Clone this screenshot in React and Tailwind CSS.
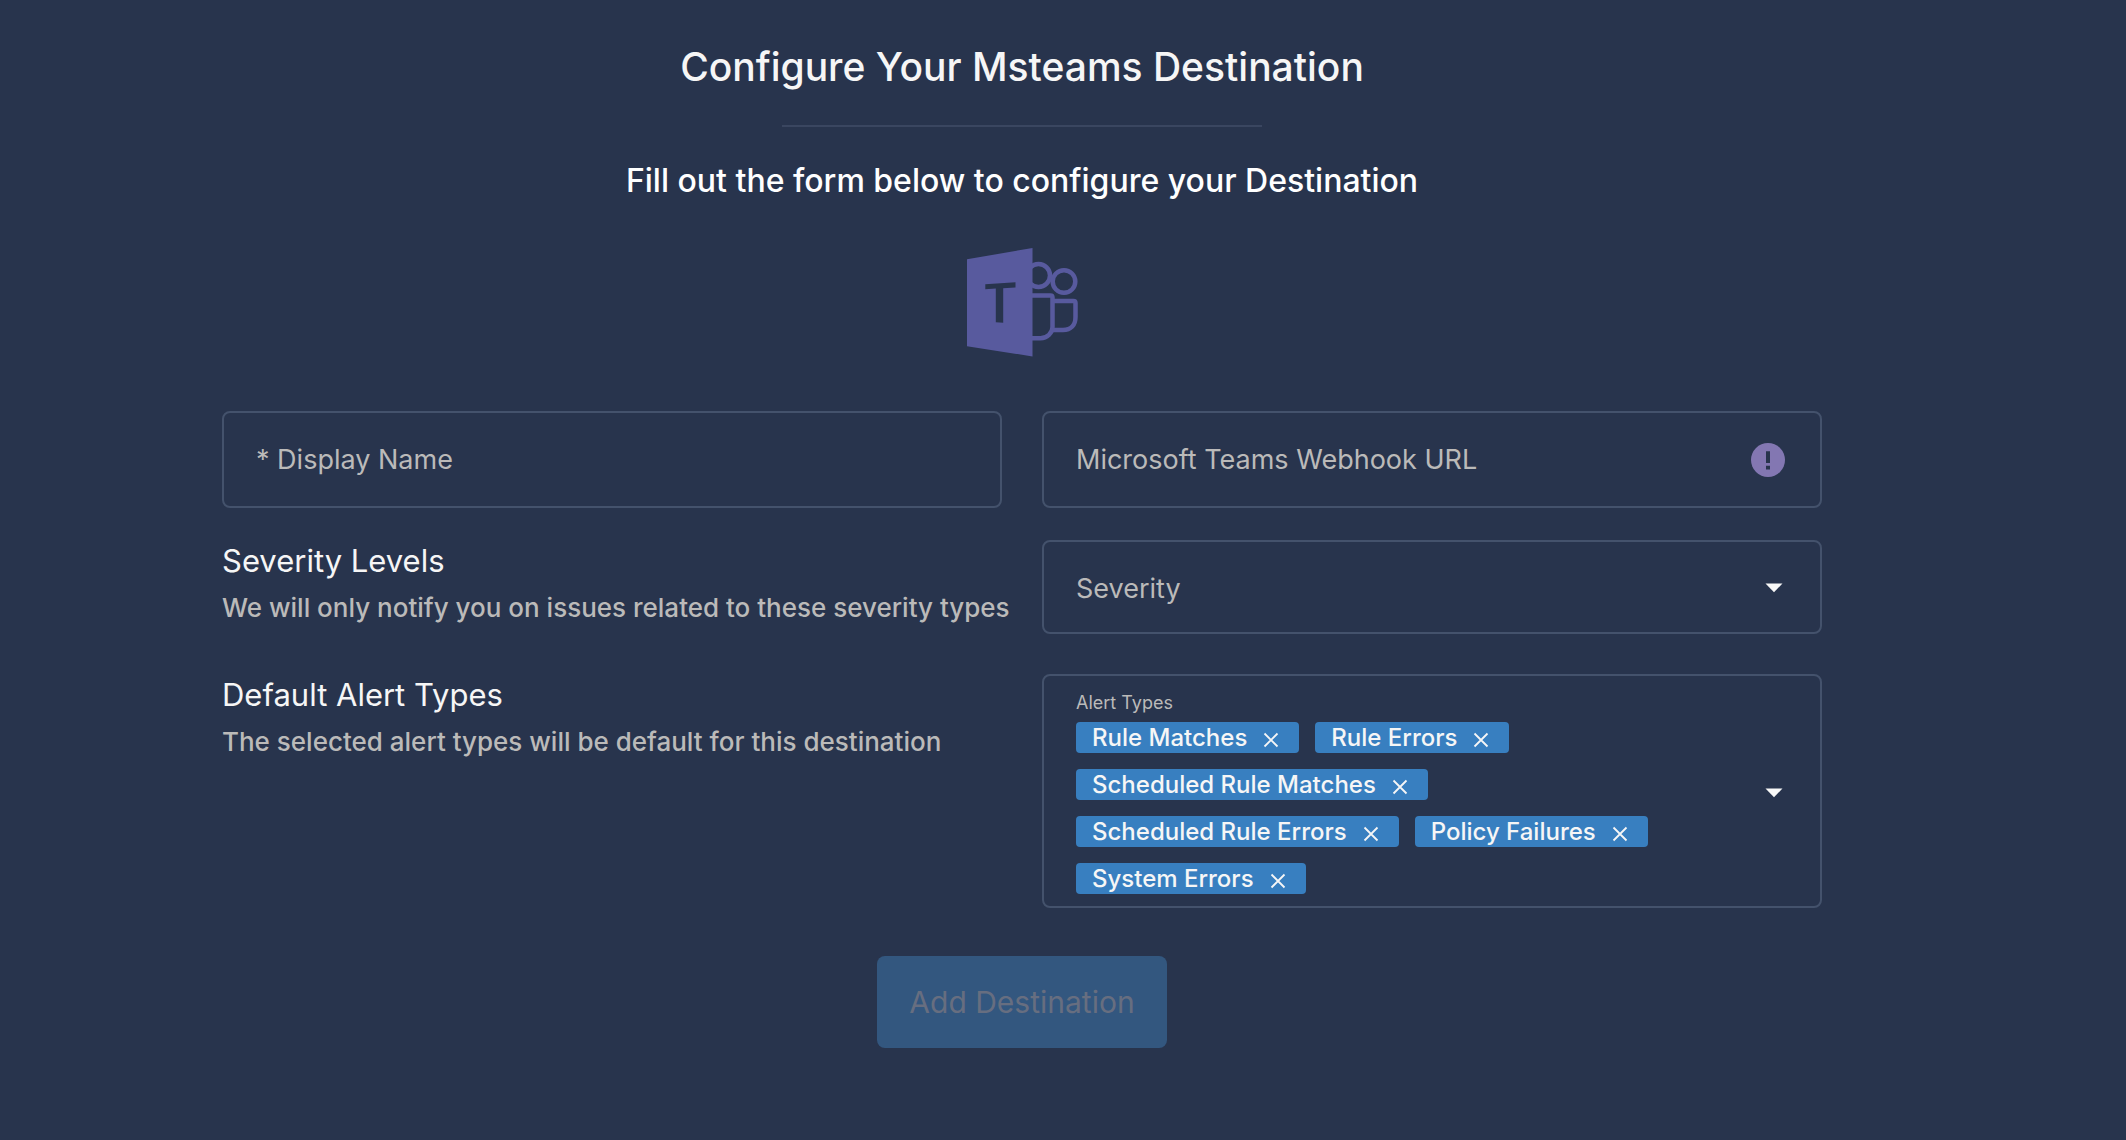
import React, { useState } from 'react';

const ALERT_TYPES = [
  'Rule Matches',
  'Rule Errors',
  'Scheduled Rule Matches',
  'Scheduled Rule Errors',
  'Policy Failures',
  'System Errors',
];

function TeamsLogo() {
  return (
    <svg width="110" height="110" viewBox="0 0 110 110" fill="none" role="img" aria-label="Microsoft Teams" className="overflow-visible">
      <g stroke="#585a9e" strokeWidth="4.5">
        <circle cx="71.5" cy="27.5" r="11.5" />
        <circle cx="97" cy="33.500" r="11.3" />
        <path d="M64 47.5H83.500Q85.500 47.500 85.500 49.500V79C85.500 85 80 90.200 73.500 90.200H64" />
        <path d="M86 53H106.500Q108.500 53 108.500 55V69C108.500 77 104 82 96 82H85" />
      </g>
      <path
        fill="#585a9e"
        fillRule="evenodd"
        d="M0 11.300L65.500 0V108.400L0 98.300ZM18.300 36.200V41.200L28.800 40.600V74.300L36.200 74.800V40.200L48.500 39.500V34.200Z"
      />
    </svg>
  );
}

function Caret() {
  return (
    <svg width="18" height="10" viewBox="0 0 18 10" aria-hidden="true">
      <path d="M0.500 0.500H17.500L9 9.300Z" fill="#f8f8f8" />
    </svg>
  );
}

function InfoIcon() {
  return (
    <svg width="34" height="34" viewBox="0 0 34 34" aria-hidden="true">
      <circle cx="17" cy="17" r="17" fill="#8377b2" />
      <path d="M15 8.300H19V20H15ZM15 22.700H19V26.500H15Z" fill="#28344d" />
    </svg>
  );
}

function Chip({ label, onRemove }) {
  return (
    <li className="flex h-[31px] items-center gap-4 rounded bg-[#387fc0] pr-5 pl-4 text-[24px] leading-[31px] font-medium whitespace-nowrap text-[#f6f6f6]">
      {label}
      <button type="button" aria-label={`Remove ${label}`} onClick={onRemove} className="pt-1">
        <svg width="16" height="16" viewBox="0 0 16 16" stroke="currentColor" strokeWidth="1.800" aria-hidden="true">
          <path d="M1.500 1.500L14.500 14.500M14.500 1.500L1.500 14.500" />
        </svg>
      </button>
    </li>
  );
}

function SectionText({ title, children }) {
  return (
    <div className="pt-px">
      <h2 className="text-[31px] leading-10 text-[#f6f6f6]">{title}</h2>
      <p className="mt-2 text-[26px] leading-[38px] font-medium text-[#bbbab9] xl:whitespace-nowrap">{children}</p>
    </div>
  );
}

const fieldBox = 'rounded-lg border-2 border-[#44526c] focus-within:border-[#387fc0]';

export default function App() {
  const [types, setTypes] = useState(ALERT_TYPES);

  return (
    <main className="min-h-screen bg-[#28344d] pt-10 pr-[82px] font-['Inter',sans-serif]">
      <form className="mx-auto flex max-w-[1600px] flex-col items-center" onSubmit={(e) => e.preventDefault()}>
        <h1 className="text-[39px] leading-[54px] font-medium text-[#f6f6f6]">Configure Your Msteams Destination</h1>
        <hr className="mt-[31px] w-[480px] border-t-2 border-[#3a4660]" />
        <p className="mt-8 text-[32px] leading-[44px] font-medium text-white">
          Fill out the form below to configure your Destination
        </p>
        <div className="mt-[45px]">
          <TeamsLogo />
        </div>

        <div className="mt-[53px] grid w-full grid-cols-2 gap-x-10">
          <div className={fieldBox}>
            <input
              type="text"
              required
              aria-label="Display Name"
              placeholder="* Display Name"
              className="block h-[93px] w-full bg-transparent px-8 text-[27px] text-[#f6f6f6] outline-none placeholder:text-[#bbbab9]"
            />
          </div>
          <div className={`${fieldBox} flex items-center pr-[35px]`}>
            <input
              type="url"
              aria-label="Microsoft Teams Webhook URL"
              placeholder="Microsoft Teams Webhook URL"
              className="block h-[93px] min-w-0 flex-1 bg-transparent pl-8 text-[27px] text-[#f6f6f6] outline-none placeholder:text-[#bbbab9]"
            />
            <button type="button" aria-label="Webhook URL help">
              <InfoIcon />
            </button>
          </div>

          <div className="mt-8">
            <SectionText title="Severity Levels">
              We will only notify you on issues related to these severity types
            </SectionText>
          </div>
          <div className={`${fieldBox} mt-8 grid items-center`}>
            <select
              aria-label="Severity"
              defaultValue=""
              className="col-start-1 row-start-1 h-[90px] w-full appearance-none bg-transparent px-8 pt-1 text-[27px] text-[#bbbab9] outline-none"
            >
              <option value="">Severity</option>
              <option>Critical</option>
              <option>High</option>
              <option>Medium</option>
              <option>Low</option>
              <option>Info</option>
            </select>
            <span className="pointer-events-none col-start-1 row-start-1 mr-[37px] justify-self-end pt-0.5">
              <Caret />
            </span>
          </div>

          <div className="mt-10">
            <SectionText title="Default Alert Types">
              The selected alert types will be default for this destination
            </SectionText>
          </div>
          <div
            role="group"
            aria-labelledby="alert-types-label"
            className={`${fieldBox} mt-10 flex items-center justify-between pt-[15px] pr-[37px] pb-3 pl-8`}
          >
            <div className="max-w-[600px]">
              <span id="alert-types-label" className="block text-[18px] leading-6 text-[#bbbab9]">Alert Types</span>
              <ul className="mt-[7px] flex flex-wrap gap-4">
                {types.map((t) => (
                  <Chip key={t} label={t} onRemove={() => setTypes(types.filter((x) => x !== t))} />
                ))}
              </ul>
            </div>
            <button type="button" aria-label="Show alert types">
              <Caret />
            </button>
          </div>
        </div>

        <button
          type="submit"
          disabled
          className="mt-12 h-[92px] rounded-lg bg-[#33577f] px-8 text-[30px] text-[#676e80]"
        >
          Add Destination
        </button>
      </form>
    </main>
  );
}
